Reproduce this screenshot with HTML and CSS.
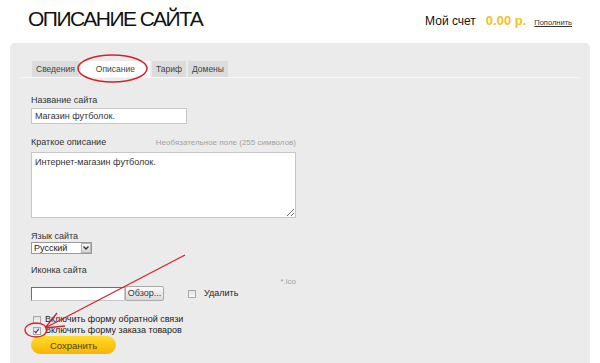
FILE: index.html
```html
<!DOCTYPE html>
<html lang="ru">
<head>
    <meta charset="UTF-8">
    <meta name="viewport" content="width=device-width, initial-scale=1.0">
    <title>Описание сайта</title>
    <link rel="stylesheet" href="styles.css">
</head>
<body>
    <header class="top">
        <h1 class="title">ОПИСАНИЕ САЙТА</h1>
        <div class="account">
            <span class="account-label">Мой счет</span>
            <span class="balance">0.00 р.</span>
            <a class="refill" href="#">Пополнить</a>
        </div>
    </header>
    <div class="panel">
        <ul class="tabs">
            <li class="tab">Сведения</li>
            <li class="tab active">Описание</li>
            <li class="tab">Тариф</li>
            <li class="tab">Домены</li>
        </ul>
        <form class="form">
            <div class="field">
                <label class="label">Название сайта</label>
                <input class="text-input" type="text" value="Магазин футболок.">
            </div>
            <div class="field">
                <div class="label-row">
                    <label class="label">Краткое описание</label>
                    <span class="hint">Необязательное поле (255 символов)</span>
                </div>
                <textarea class="textarea">Интернет-магазин футболок.</textarea>
            </div>
            <div class="field field-select">
                <label class="label">Язык сайта</label>
                <div class="select">
                    <span class="select-value">Русский</span>
                    <span class="select-arrow">
                        <svg width="8" height="8" viewBox="0 0 8 8"><path d="M1.5 2.5 L4 5 L6.5 2.5" fill="none" stroke="#333" stroke-width="1.4"/></svg>
                    </span>
                </div>
            </div>
            <div class="field field-icon">
                <label class="label">Иконка сайта</label>
                <div class="hint hint-right">*.ico</div>
                <div class="file-row">
                    <div class="file">
                        <span class="file-path"></span>
                        <span class="file-btn">Обзор...</span>
                    </div>
                    <label class="check-label check-wide"><span class="check"></span>Удалить</label>
                </div>
            </div>
            <div class="checks">
                <label class="check-label"><span class="check"></span>Включить форму обратной связи</label>
                <label class="check-label"><span class="check">
                    <svg width="8" height="8" viewBox="0 0 8 8"><path d="M1.6 4.2 L3.3 6 L6.6 1.4" fill="none" stroke="#2d3f92" stroke-width="1.3"/></svg>
                </span>Включить форму заказа товаров</label>
            </div>
            <button class="save" type="button">Сохранить</button>
        </form>
    </div>
    <svg class="marks" width="600" height="363" viewBox="0 0 600 363">
        <ellipse cx="112.5" cy="68.5" rx="34.5" ry="13.5" fill="none" stroke="#d3242b" stroke-width="1.5"/>
        <ellipse cx="36" cy="330" rx="11" ry="7" fill="none" stroke="#d3242b" stroke-width="1.3"/>
        <path d="M185 255 L45 328 M45 328 L57 313 M45 328 L65 326" fill="none" stroke="#d3242b" stroke-width="1.3"/>
    </svg>
</body>
</html>
```

FILE: styles.css
```css
*{
    margin: 0;
    padding: 0;
    box-sizing: border-box;
}
body{
    font-family: "Liberation Sans", Arial, sans-serif;
    background: #fff;
    color: #333;
    width: 600px;
    height: 363px;
    overflow: hidden;
    position: relative;
}
.top{
    display: flex;
    justify-content: space-between;
    align-items: center;
    height: 38px;
    padding: 0 28px;
}
.title{
    font-size: 21px;
    font-weight: normal;
    letter-spacing: -1.5px;
    color: #111;
}
.account{
    display: flex;
    align-items: baseline;
    padding-top: 2px;
}
.account-label{
    font-size: 12px;
    color: #111;
    margin-right: 10px;
}
.balance{
    font-size: 13px;
    font-weight: bold;
    color: #f2c21c;
    margin-right: 8px;
}
.refill{
    font-size: 7.5px;
    color: #333;
}
.panel{
    margin: 5px 10px 0;
    background: #ebebeb;
    border-radius: 5px 5px 0 0;
    padding: 18px 11px 40px;
}
.tabs{
    display: flex;
    gap: 2px;
    list-style: none;
    padding-left: 11px;
    border-bottom: 1px solid #f6f6f6;
}
.tab{
    height: 16px;
    line-height: 16px;
    padding: 0 4px;
    font-size: 8.5px;
    color: #444;
    background: #dcdcdc;
}
.tab.active{
    background: #fff;
    padding: 0 15px;
}
.form{
    padding: 17px 10px 0;
    width: 285px;
}
.field{
    margin-bottom: 13px;
}
.label{
    display: block;
    font-size: 9px;
    line-height: 11px;
    margin-bottom: 2px;
    color: #333;
}
.label-row{
    display: flex;
    justify-content: space-between;
    align-items: baseline;
    margin-bottom: 4px;
}
.label-row .label{
    margin-bottom: 0;
}
.hint{
    font-size: 8px;
    color: #a2a2a2;
}
.text-input{
    display: block;
    width: 156px;
    height: 16px;
    border: 1px solid #c6c6c6;
    background: #fff;
    padding: 0 3px;
    font-family: inherit;
    font-size: 9px;
    color: #333;
    outline: none;
}
.textarea{
    display: block;
    width: 265px;
    height: 66px;
    border: 1px solid #c6c6c6;
    padding: 4px 3px;
    font-family: inherit;
    font-size: 9px;
    color: #333;
    resize: vertical;
    outline: none;
}
.field-select{
    margin-bottom: 11px;
}
.field-select .label{
    margin-bottom: 0;
}
.select{
    display: flex;
    align-items: center;
    width: 61px;
    height: 12px;
    border: 1px solid #9a9a9a;
    background: #fff;
}
.select-value{
    flex: 1;
    font-size: 9px;
    padding-left: 2px;
    color: #222;
}
.select-arrow{
    display: flex;
    align-items: center;
    justify-content: center;
    width: 10px;
    height: 10px;
    border: 1px solid #b5b5b5;
    background: linear-gradient(#f7f7f7, #d8d8d8);
}
.hint-right{
    text-align: right;
    line-height: 8px;
    margin-top: 2px;
    width: 265px;
}
.file-row{
    display: flex;
    align-items: center;
    gap: 24px;
}
.file{
    display: flex;
    align-items: center;
}
.file-path{
    width: 94px;
    height: 14px;
    background: #fff;
    border: 1px solid #c8c8c8;
    border-top-color: #707070;
    border-left-color: #707070;
}
.file-btn{
    width: 39px;
    height: 15px;
    line-height: 13px;
    text-align: center;
    font-size: 9px;
    color: #333;
    border: 1px solid #a9a9a9;
    border-radius: 2px;
    background: linear-gradient(#fafafa, #dadada);
}
.check-label{
    display: flex;
    align-items: center;
    gap: 4px;
    font-size: 9px;
    line-height: 11px;
    color: #222;
}
.check-wide{
    gap: 8px;
}
.check{
    display: flex;
    width: 8px;
    height: 8px;
    border: 1px solid #a8a8a8;
    background: linear-gradient(#e2e2e2, #f8f8f8);
}
.check svg{
    margin: -1px 0 0 -1px;
}
.checks{
    padding-left: 2px;
}
.save{
    display: block;
    width: 85px;
    height: 18px;
    border: none;
    border-radius: 9px;
    background: linear-gradient(#ffdb2e, #f7b600);
    font-family: inherit;
    font-size: 9.5px;
    color: #4f431f;
}
.marks{
    position: absolute;
    top: 0;
    left: 0;
    pointer-events: none;
}
```
